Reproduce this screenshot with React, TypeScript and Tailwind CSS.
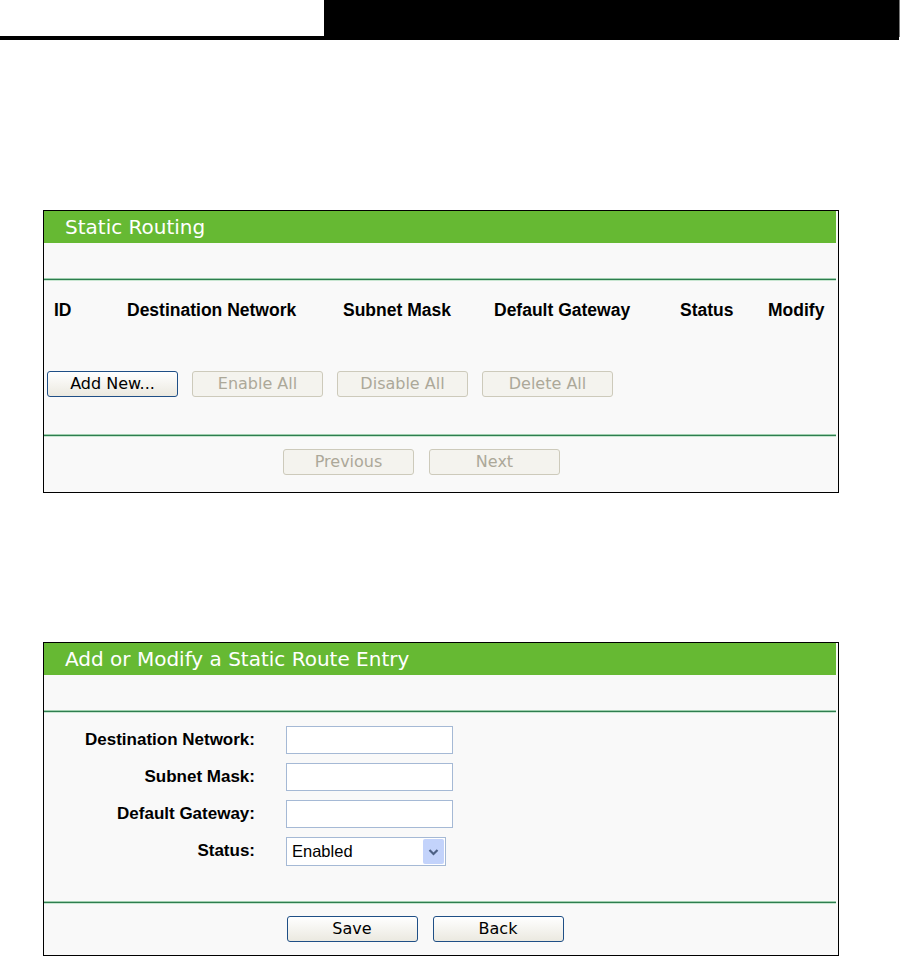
import React from "react";

const font = { fontFamily: '"Liberation Sans", Arial, sans-serif' };
const wide = { fontFamily: '"DejaVu Sans", Verdana, sans-serif' };

const Separator = () => (
  <div className="flex flex-col">
    <div className="h-px bg-[#9fcfae]" />
    <div className="h-px bg-[#2e7d4f]" />
    <div className="h-px bg-[#c8e6d1]" />
  </div>
);

const Btn = ({
  label,
  disabled,
  className = "",
}: {
  label: string;
  disabled?: boolean;
  className?: string;
}) =>
  disabled ? (
    <button
      style={wide}
      className={`h-[26px] w-[131px] rounded-[3px] border border-[#cdcabb] bg-[#f4f3ee] text-[16px] text-[#aca899] ${className}`}
    >
      {label}
    </button>
  ) : (
    <button
      style={wide}
      className={`h-[26px] w-[131px] rounded-[3px] border border-[#1f4f86] bg-gradient-to-b from-white to-[#ebe9e0] text-[16px] text-black ${className}`}
    >
      {label}
    </button>
  );

const Panel = ({
  title,
  children,
}: {
  title: string;
  children: React.ReactNode;
}) => (
  <div className="ml-[43px] w-[796px] border border-black bg-[#f9f9f9] pr-[2px]">
    <div
      style={wide}
      className="flex h-[32px] items-center bg-[#66b933] pl-[21px] text-[20px] leading-none text-white"
    >
      {title}
    </div>
    <div className="h-[35px]" />
    <Separator />
    {children}
  </div>
);

const FormRow = ({ label, children }: { label: string; children: React.ReactNode }) => (
  <div className="flex h-[37px] items-start">
    <div className="flex h-[28px] w-[211px] items-center justify-end whitespace-nowrap text-[17px] font-bold text-black">
      {label}
    </div>
    <div className="ml-[31px]">{children}</div>
  </div>
);

const TextBox = () => (
  <div className="h-[28px] w-[167px] border border-[#a5b9d5] bg-white" />
);

const App = () => {
  const cols = [
    { label: "ID", w: "w-[73px]" },
    { label: "Destination Network", w: "w-[216px]" },
    { label: "Subnet Mask", w: "w-[151px]" },
    { label: "Default Gateway", w: "w-[186px]" },
    { label: "Status", w: "w-[88px]" },
    { label: "Modify", w: "w-[60px]" },
  ];

  return (
    <div className="min-h-[965px] w-[901px] bg-white" style={font}>
      <div className="flex h-[40px]">
        <div className="w-[324px] border-b-4 border-black" />
        <div className="w-[575px] bg-black" />
        <div className="h-[37px] w-px bg-[#777]" />
      </div>

      <div className="mt-[170px]">
        <Panel title="Static Routing">
          <div className="flex h-[57px] items-center pl-[10px] pt-[1px] text-[17.5px] font-bold text-black">
            {cols.map((c) => (
              <div key={c.label} className={`${c.w} whitespace-nowrap`}>
                {c.label}
              </div>
            ))}
          </div>
          <div className="flex gap-[14px] pl-[3px] pt-[33px]">
            <Btn label="Add New..." className="w-[130px]" />
            <Btn label="Enable All" disabled />
            <Btn label="Disable All" disabled />
            <Btn label="Delete All" disabled />
          </div>
          <div className="h-[37px]" />
          <Separator />
          <div className="flex justify-center gap-[15px] pb-[17px] pt-[12px] pr-[37px]">
            <Btn label="Previous" disabled className="w-[128px]" />
            <Btn label="Next" disabled />
          </div>
        </Panel>
      </div>

      <div className="mt-[149px]">
        <Panel title="Add or Modify a Static Route Entry">
          <div className="pt-[13px] pb-[27px]">
            <FormRow label="Destination Network:">
              <TextBox />
            </FormRow>
            <FormRow label="Subnet Mask:">
              <TextBox />
            </FormRow>
            <FormRow label="Default Gateway:">
              <TextBox />
            </FormRow>
            <FormRow label="Status:">
              <div className="flex h-[29px] w-[160px] items-center justify-between border border-[#a5b9d5] bg-white pl-[5px] pr-px text-[16.5px] text-black">
                <span>Enabled</span>
                <span className="flex h-[25px] w-[21px] items-center justify-center rounded-[2px] bg-[#c3d3fb]">
                  <svg width="11" height="8" viewBox="0 0 11 8">
                    <path
                      d="M1.5 2 L5.5 6 L9.5 2"
                      fill="none"
                      stroke="#4d6185"
                      strokeWidth="2.2"
                    />
                  </svg>
                </span>
              </div>
            </FormRow>
          </div>
          <Separator />
          <div className="flex justify-center gap-[15px] pb-[13px] pt-[12px] pr-[30px]">
            <Btn label="Save" />
            <Btn label="Back" />
          </div>
        </Panel>
      </div>
    </div>
  );
};

export default App;
